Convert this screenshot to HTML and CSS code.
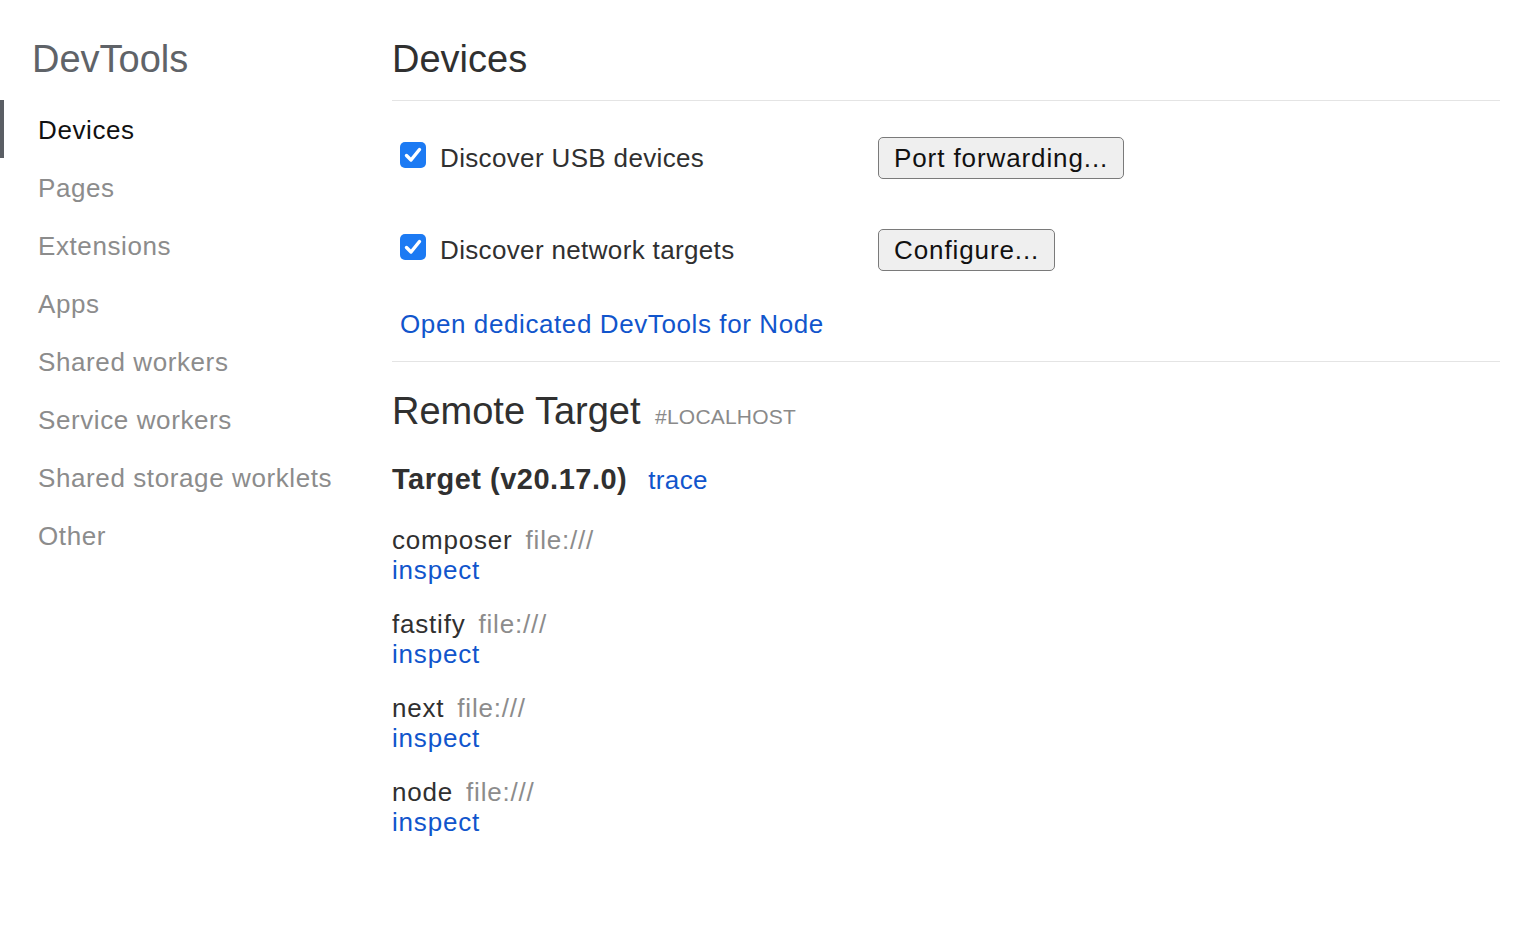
FILE: index.html
```html
<!DOCTYPE html>
<html lang="en">
<head>
<meta charset="utf-8">
<title>Inspect with Chrome Developer Tools</title>
<link rel="stylesheet" href="styles.css">
</head>
<body>
<div class="page">
  <nav class="sidebar">
    <header class="side-header"><h1 class="side-title">DevTools</h1></header>
    <ul class="nav">
      <li class="nav-item active">Devices</li>
      <li class="nav-item">Pages</li>
      <li class="nav-item">Extensions</li>
      <li class="nav-item">Apps</li>
      <li class="nav-item">Shared workers</li>
      <li class="nav-item">Service workers</li>
      <li class="nav-item">Shared storage worklets</li>
      <li class="nav-item">Other</li>
    </ul>
  </nav>
  <main class="content">
    <header class="content-header"><h1 class="content-title">Devices</h1></header>
    <section class="device-options">
      <div class="option-row">
        <label class="check">
          <span class="box"><svg viewBox="0 0 26 26" width="26" height="26"><path d="M6.5 13.5 L11 18 L19.5 7.5" fill="none" stroke="#fff" stroke-width="3.4" stroke-linecap="round" stroke-linejoin="round"/></svg></span>
          <span class="check-text">Discover USB devices</span>
        </label>
        <button class="btn">Port forwarding...</button>
      </div>
      <div class="option-row">
        <label class="check">
          <span class="box"><svg viewBox="0 0 26 26" width="26" height="26"><path d="M6.5 13.5 L11 18 L19.5 7.5" fill="none" stroke="#fff" stroke-width="3.4" stroke-linecap="round" stroke-linejoin="round"/></svg></span>
          <span class="check-text">Discover network targets</span>
        </label>
        <button class="btn">Configure...</button>
      </div>
      <a class="link node-link" href="#">Open dedicated DevTools for Node</a>
    </section>
    <section class="remote">
      <h2 class="remote-title">Remote Target <span class="host">#LOCALHOST</span></h2>
      <div class="target-head">
        <span class="target-name">Target (v20.17.0)</span>
        <a class="link" href="#">trace</a>
      </div>
      <div class="item">
        <div class="item-title"><span class="name">composer</span><span class="url">file:///</span></div>
        <a class="link" href="#">inspect</a>
      </div>
      <div class="item">
        <div class="item-title"><span class="name">fastify</span><span class="url">file:///</span></div>
        <a class="link" href="#">inspect</a>
      </div>
      <div class="item">
        <div class="item-title"><span class="name">next</span><span class="url">file:///</span></div>
        <a class="link" href="#">inspect</a>
      </div>
      <div class="item">
        <div class="item-title"><span class="name">node</span><span class="url">file:///</span></div>
        <a class="link" href="#">inspect</a>
      </div>
    </section>
  </main>
</div>
</body>
</html>
```

FILE: styles.css
```css
* { box-sizing: border-box; }
html, body {
  margin: 0;
  padding: 0;
  background: #fff;
}
body {
  font-family: "Liberation Sans", Arial, sans-serif;
  color: #303030;
  font-size: 26px;
  letter-spacing: 0.35px;
}
.page {
  display: flex;
  width: 1536px;
  min-height: 934px;
}
.sidebar {
  width: 392px;
  flex: none;
}
.side-header {
  height: 100px;
  padding-top: 37px;
}
.side-title {
  margin: 0;
  font-size: 38px;
  line-height: 44px;
  font-weight: normal;
  color: #5f6368;
  padding-left: 32px;
  letter-spacing: 0;
}
.nav {
  list-style: none;
  margin: 0;
  padding: 0;
}
.nav-item {
  height: 58px;
  line-height: 60px;
  padding-left: 38px;
  color: #8c8c8c;
  font-size: 26px;
  letter-spacing: 0.6px;
}
.nav-item.active {
  border-left: 4px solid #5a5e64;
  color: #111;
  padding-left: 34px;
}
.content {
  width: 1108px;
  flex: none;
}
.content-header {
  height: 101px;
  padding-top: 37px;
  border-bottom: 1px solid #e4e4e4;
}
.content-title {
  margin: 0;
  font-size: 38px;
  line-height: 44px;
  font-weight: normal;
  color: #303030;
  letter-spacing: 0;
}
.device-options {
  padding-top: 36px;
  padding-bottom: 22px;
  border-bottom: 1px solid #e4e4e4;
  display: flex;
  flex-direction: column;
  align-items: flex-start;
}
.option-row {
  display: flex;
  align-items: center;
  height: 42px;
  width: 100%;
}
.option-row + .option-row { margin-top: 50px; }
.check {
  display: flex;
  align-items: center;
  width: 486px;
  padding-left: 8px;
  line-height: 30px;
}
.box {
  width: 26px;
  height: 26px;
  border-radius: 5px;
  background: #1c7af3;
  margin-right: 14px;
  margin-bottom: 6px;
  display: flex;
}
.box svg { display: block; }
.btn {
  height: 42px;
  padding: 0 15px;
  font-family: "Liberation Sans", Arial, sans-serif;
  font-size: 26px;
  letter-spacing: 0.9px;
  color: #111;
  background: #efefef;
  border: 1.5px solid #7a7a7a;
  border-radius: 5px;
}
.link {
  color: #1155cc;
  text-decoration: none;
}
.node-link {
  margin-top: 38px;
  margin-left: 8px;
  line-height: 30px;
  letter-spacing: 0.6px;
}
.remote-title {
  margin: 27px 0 0;
  font-size: 38px;
  line-height: 44px;
  font-weight: normal;
  color: #303030;
  letter-spacing: 0;
}
.host {
  font-size: 21px;
  color: #8a8a8a;
  margin-left: 4px;
  letter-spacing: 0.2px;
}
.target-head {
  margin-top: 23px;
  display: flex;
  align-items: baseline;
  gap: 21px;
  line-height: 34px;
}
.target-name {
  font-weight: bold;
  font-size: 29px;
  letter-spacing: 0.5px;
}
.item {
  display: flex;
  flex-direction: column;
  align-items: flex-start;
  line-height: 30px;
  margin-top: 24px;
  letter-spacing: 0.8px;
}
.target-head + .item { margin-top: 28px; }
.item-title {
  display: flex;
  gap: 13px;
}
.url { color: #8c8c8c; }
```
